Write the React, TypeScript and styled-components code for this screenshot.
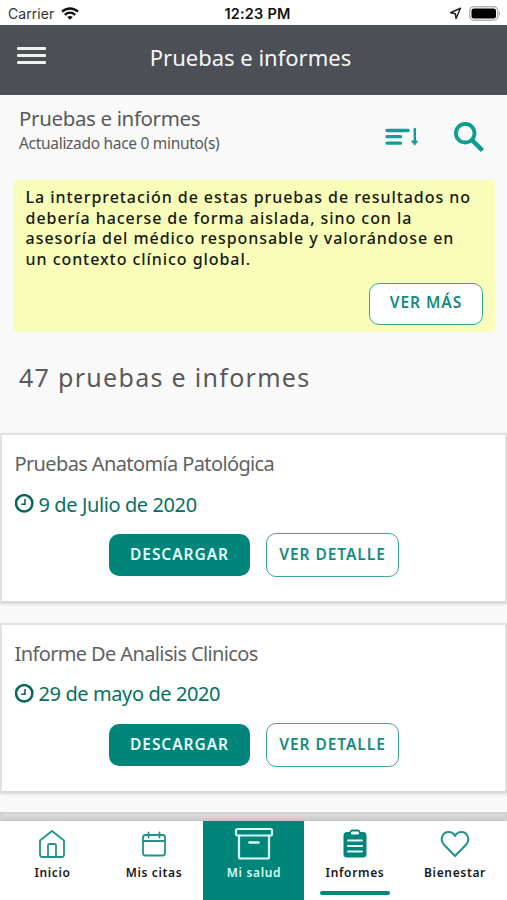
import React from 'react';
import styled, { createGlobalStyle, css } from 'styled-components';

const teal = '#00857a';

const GlobalStyle = createGlobalStyle`
  * { box-sizing: border-box; }
  body { margin: 0; background: #f8f8f8; }
`;

const Screen = styled.div`
  display: flex;
  flex-direction: column;
  width: 507px;
  height: 900px;
  overflow: hidden;
  background: #f9f9f9;
  color: #58595b;
  font-family: "Noto Sans", "Open Sans", sans-serif;
  white-space: nowrap;
`;

const StatusBar = styled.div`
  flex: none;
  display: grid;
  grid-template-columns: 1fr auto 1fr;
  align-items: center;
  height: 25px;
  padding: 2px 6px 0 8px;
  background: #fff;
  color: #111;
  font-family: Inter, sans-serif;
`;

const Carrier = styled.div`
  display: flex;
  align-items: center;
  gap: 7px;
  color: #333;
  font-size: 14px;
  letter-spacing: 0.05px;
`;

const Clock = styled.div`
  padding-left: 6px;
  font-size: 14.5px;
  font-weight: 600;
  letter-spacing: 0.2px;
`;

const Indicators = styled.div`
  display: flex;
  justify-content: flex-end;
  align-items: center;
  gap: 7px;
`;

const Header = styled.header`
  flex: none;
  display: grid;
  grid-template-columns: 47px 1fr 47px;
  align-items: center;
  height: 70px;
  padding: 0 0 6px;
  background: #4c4f56;
`;

const MenuButton = styled.button`
  display: flex;
  flex-direction: column;
  justify-content: center;
  gap: 4px;
  height: 40px;
  padding: 0 0 3px 17px;
  border: 0;
  background: none;
`;

const MenuLine = styled.span`
  width: 29px;
  height: 3px;
  border-radius: 1px;
  background: #f1f1f1;
`;

const HeaderTitle = styled.h1`
  margin: 0;
  color: #f7f7f7;
  font-size: 22px;
  font-weight: 400;
  line-height: 30px;
  text-align: center;
  padding-right: 6px;
`;

const Content = styled.main`
  flex: 1;
  min-height: 0;
  overflow: hidden;
  display: flex;
  flex-direction: column;
`;

const SubHeader = styled.div`
  flex: none;
  display: flex;
  justify-content: space-between;
  height: 85px;
  padding: 9px 22px 0 19px;
`;

const SubTitle = styled.h2`
  margin: 0;
  font-size: 20.5px;
  font-weight: 400;
  line-height: 28px;
  letter-spacing: -0.36px;
`;

const Updated = styled.div`
  font-size: 15.5px;
  line-height: 22px;
  letter-spacing: -0.3px;
`;

const Tools = styled.div`
  display: flex;
  align-items: center;
  gap: 34px;
  height: 65px;
`;

const Notice = styled.section`
  flex: none;
  display: flex;
  flex-direction: column;
  height: 152px;
  margin: 0 12px 0 13px;
  padding: 7px 12px 0 12.6px;
  border-radius: 4px;
  background: #f8feb9;
`;

const NoticeText = styled.p`
  margin: 0;
  color: #171910;
  font-size: 16px;
  font-weight: 500;
  line-height: 20.7px;
  letter-spacing: 0.94px;
`;

const Button = styled.button<{ $solid?: boolean; $width: number }>`
  width: ${p => p.$width}px;
  height: 44px;
  padding: 0 0 2px;
  border: 1.5px solid #3ba399;
  border-radius: 10px;
  background: #fff;
  color: #148b80;
  font: 600 15.5px "Noto Sans", sans-serif;
  letter-spacing: 0.95px;
  ${p => p.$solid && css`
    height: 42px;
    border: 0;
    background: ${teal};
    color: #e8faf7;
  `}
`;

const NoticeButton = styled(Button)`
  align-self: flex-end;
  height: 42px;
  margin-top: 13px;
  padding-bottom: 4px;
`;

const Count = styled.h2`
  flex: none;
  margin: 0;
  height: 101px;
  padding: 28px 0 0 19px;
  font-size: 25px;
  font-weight: 400;
  line-height: 35px;
  letter-spacing: 1.3px;
`;

const Card = styled.article`
  flex: none;
  height: 170px;
  margin-bottom: 19.5px;
  padding: 16px 12.5px 0;
  border: 2px solid #e1e1e1;
  border-bottom-color: #d8d8d8;
  background: #fff;
  box-shadow: 0 1px 3px rgba(0, 0, 0, 0.14);
`;

const CardTitle = styled.h3`
  margin: 0;
  font-size: 20px;
  font-weight: 400;
  line-height: 26px;
  letter-spacing: -0.62px;
  color: #626262;
`;

const CardDate = styled.div`
  display: flex;
  align-items: center;
  gap: 4px;
  height: 26px;
  margin-top: 14px;
  color: #08705f;
  font-size: 20px;
  letter-spacing: -0.4px;
`;

const Actions = styled.div`
  display: flex;
  align-items: center;
  gap: 16px;
  margin: 16px 0 0 94.5px;
`;

const NextCard = styled.div`
  flex: none;
  height: 40px;
  border: 2px solid #d2d2d2;
  background: linear-gradient(#dedede, #c3c3c3 8px);
`;

const TabBar = styled.nav`
  flex: none;
  display: grid;
  grid-template-columns: 104px 99px 101px 101px 99px;
  height: 79px;
  background: #fff;
`;

const Tab = styled.a<{ $filled?: boolean }>`
  display: flex;
  flex-direction: column;
  align-items: center;
  padding-top: 6px;
  color: ${p => (p.$filled ? '#d9faf5' : '#171717')};
  background: ${p => (p.$filled ? teal : '#fff')};
`;

const TabIcon = styled.span`
  display: flex;
  align-items: center;
  justify-content: center;
  height: 33px;
  color: ${teal};
`;

const TabLabel = styled.span`
  padding-left: 1px;
  font-size: 12px;
  font-weight: 600;
  line-height: 18px;
  letter-spacing: 0.65px;
  margin-top: 4px;
`;

const TabMarker = styled.span`
  width: 70px;
  height: 4px;
  margin-top: 9px;
  border-radius: 2px;
  background: ${teal};
`;

const WifiIcon = () => (
  <svg width="18" height="13" viewBox="0 0 18 13" fill="none" stroke="#111" strokeWidth="2.3">
    <path d="M1 4.7C5.6.4 12.4.4 17 4.7" />
    <path d="M3.8 7.8C6.9 5 11.100 5 14.2 7.8" />
    <path d="M9 12.7 6.2 9.9C7.9 8.6 10.1 8.6 11.8 9.9Z" fill="#111" stroke="none" />
  </svg>
);

const LocationIcon = () => (
  <svg width="13" height="13" viewBox="0 0 13 13" fill="none" stroke="#222" strokeWidth="1.5" strokeLinejoin="round">
    <path d="M11.5 1.3 1.5 5.8 6.3 6.7 7 11.5Z" />
  </svg>
);

const BatteryIcon = () => (
  <svg width="32" height="15" viewBox="0 0 32 15">
    <rect x=".75" y=".75" width="28" height="13.5" rx="4" fill="none" stroke="#b4b4b4" strokeWidth="1.5" />
    <rect x="2.5" y="2.5" width="24.5" height="10" rx="2.3" fill="#000" />
    <path d="M30 5.5c1.5.6 1.5 3.400 0 4Z" fill="#aaa" />
  </svg>
);

const SortIcon = () => (
  <svg width="34" height="20" viewBox="0 0 34 20" fill="none" stroke="#129c9b" strokeLinecap="round">
    <path d="M2 3.5H23M2 9.7H15.5M2 16.2H15.5" strokeWidth="3.3" />
    <path d="M29.8 2V14" strokeWidth="2.4" />
    <path d="M26.700 14H32.900L29.800 18Z" fill="#129c9b" strokeWidth=".8" />
  </svg>
);

const SearchIcon = () => (
  <svg width="32" height="32" viewBox="0 0 32 32" fill="none" stroke="#0b9e91">
    <circle cx="12.2" cy="12.2" r="9.3" strokeWidth="3.8" />
    <path d="M18.800 18.800 29.500 29.500" strokeWidth="4.5" />
  </svg>
);

const ClockIcon = () => (
  <svg width="20" height="20" viewBox="0 0 20 20" fill="none" stroke="#08665a">
    <circle cx="9.2" cy="9.3" r="8.2" strokeWidth="2.5" />
    <path d="M10 5V10.200H6.200" strokeWidth="1.6" />
  </svg>
);

const HomeIcon = () => (
  <svg width="28" height="30" viewBox="0 0 28 30" fill="none" stroke="#22938b" strokeWidth="1.8" strokeLinejoin="round">
    <path d="M2 11.5 14 2 26 11.5V25.5Q26 28 23.5 28H4.5Q2 28 2 25.5Z" />
    <path d="M10 28V16.5Q10 15 11.5 15H16.500Q18 15 18 16.500V28" />
  </svg>
);

const CalendarIcon = () => (
  <svg width="26" height="26" viewBox="0 0 26 26" fill="none" stroke="#22938b" strokeWidth="1.8" strokeLinecap="round">
    <rect x="2" y="4" width="22" height="20.5" rx="2.5" />
    <path d="M2 10H24M7.5 1.5V6.5M18.500 1.5V6.5" />
  </svg>
);

const BoxIcon = () => (
  <svg width="40" height="34" viewBox="0 0 40 34" fill="none" stroke="#d9faf5" strokeWidth="2.2" strokeLinejoin="round" strokeLinecap="round">
    <rect x="2" y="2" width="36" height="6.5" rx="1.5" />
    <path d="M5 8.5V30Q5 31.5 6.5 31.5H33.5Q35 31.5 35 30V8.5" />
    <path d="M15.5 15.5H24.5" strokeWidth="2.6" />
  </svg>
);

const ClipboardIcon = () => (
  <svg width="24" height="29" viewBox="0 0 24 29" fill="none">
    <path d="M4 3H6.5Q7 .5 9 .5H15Q17 .5 17.5 3H20Q23.5 3 23.5 6.5V25Q23.5 28.5 20 28.5H4Q.5 28.5.5 25V6.5Q.5 3 4 3Z" fill={teal} />
    <rect x="8" y="2.5" width="8" height="3" rx="1" fill="#e9fffb" />
    <path d="M5 11.5H19M5 17H19M5 22.5H19" stroke="#e9fffb" strokeWidth="2" strokeLinecap="round" />
  </svg>
);

const HeartIcon = () => (
  <svg width="30" height="28" viewBox="0 0 30 28" fill="none" stroke="#22938b" strokeWidth="2" strokeLinejoin="round">
    <path d="M15 26 3.8 14.5C-.5 9.5 2.5 2 8.5 2C11.5 2 13.8 3.5 15 6C16.2 3.5 18.5 2 21.5 2C27.5 2 30.5 9.5 26.2 14.5Z" />
  </svg>
);

const reports = [
  { title: 'Pruebas Anatomía Patológica', date: '9 de Julio de 2020' },
  { title: 'Informe De Analisis Clinicos', date: '29 de mayo de 2020' },
];

const tabs = [
  { label: 'Inicio', Icon: HomeIcon },
  { label: 'Mis citas', Icon: CalendarIcon },
  { label: 'Mi salud', Icon: BoxIcon, filled: true },
  { label: 'Informes', Icon: ClipboardIcon, marked: true },
  { label: 'Bienestar', Icon: HeartIcon },
];

export default function App() {
  return (
    <Screen>
      <GlobalStyle />
      <StatusBar>
        <Carrier>Carrier <WifiIcon /></Carrier>
        <Clock>12:23 PM</Clock>
        <Indicators><LocationIcon /><BatteryIcon /></Indicators>
      </StatusBar>
      <Header>
        <MenuButton aria-label="Menú"><MenuLine /><MenuLine /><MenuLine /></MenuButton>
        <HeaderTitle>Pruebas e informes</HeaderTitle>
      </Header>
      <Content>
        <SubHeader>
          <div>
            <SubTitle>Pruebas e informes</SubTitle>
            <Updated>Actualizado hace 0 minuto(s)</Updated>
          </div>
          <Tools><SortIcon /><SearchIcon /></Tools>
        </SubHeader>
        <Notice>
          <NoticeText>
            La interpretación de estas pruebas de resultados no<br />
            debería hacerse de forma aislada, sino con la<br />
            asesoría del médico responsable y valorándose en<br />
            un contexto clínico global.
          </NoticeText>
          <NoticeButton $width={114}>VER MÁS</NoticeButton>
        </Notice>
        <Count>47 pruebas e informes</Count>
        {reports.map(r => (
          <Card key={r.title}>
            <CardTitle>{r.title}</CardTitle>
            <CardDate><ClockIcon />{r.date}</CardDate>
            <Actions>
              <Button $solid $width={141}>DESCARGAR</Button>
              <Button $width={133}>VER DETALLE</Button>
            </Actions>
          </Card>
        ))}
        <NextCard />
      </Content>
      <TabBar>
        {tabs.map(({ label, Icon, filled, marked }) => (
          <Tab key={label} $filled={filled}>
            <TabIcon><Icon /></TabIcon>
            <TabLabel>{label}</TabLabel>
            {marked && <TabMarker />}
          </Tab>
        ))}
      </TabBar>
    </Screen>
  );
}
